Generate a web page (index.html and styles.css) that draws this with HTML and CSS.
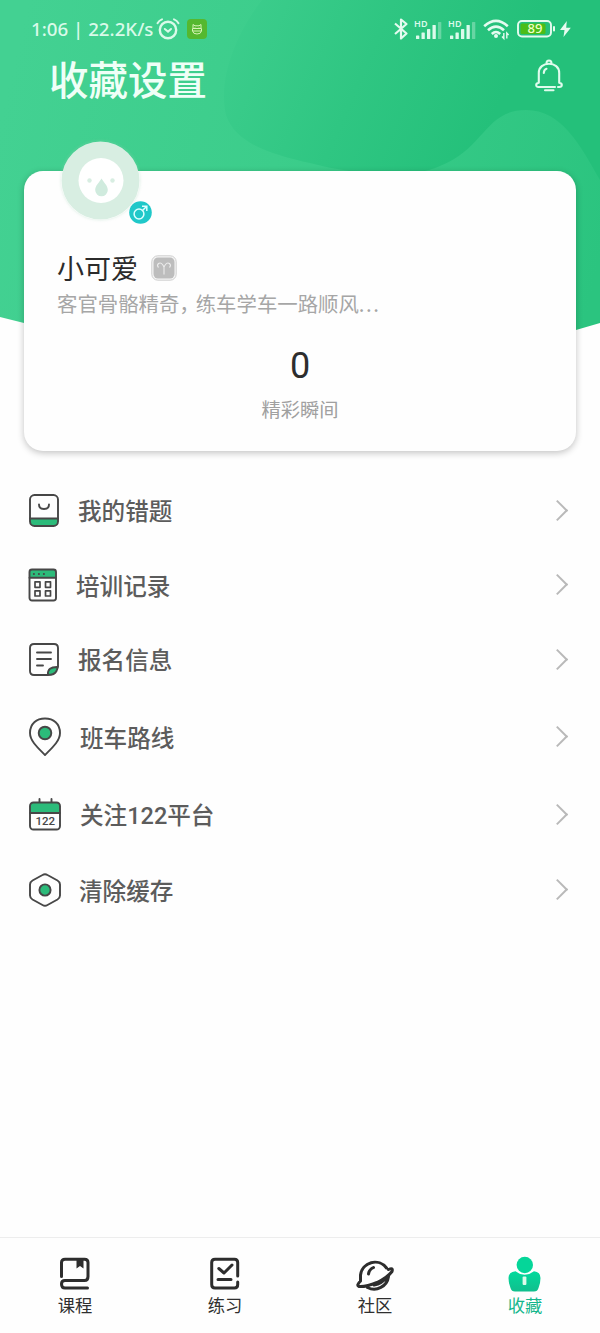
FILE: index.html
```html
<!DOCTYPE html>
<html lang="zh-CN">
<head>
<meta charset="utf-8">
<title>收藏设置</title>
<link rel="stylesheet" href="styles.css">
</head>
<body>
<div class="screen">
  <svg class="backdrop" width="600" height="345" viewBox="0 0 600 345">
    <defs>
      <linearGradient id="base" gradientUnits="userSpaceOnUse" x1="0" y1="120" x2="600" y2="260">
        <stop offset="0" stop-color="#43d192"/><stop offset="0.45" stop-color="#3ccd8b"/><stop offset="1" stop-color="#2bc47f"/>
      </linearGradient>
      <linearGradient id="blob" gradientUnits="userSpaceOnUse" x1="225" y1="40" x2="480" y2="150">
        <stop offset="0" stop-color="#3ccd8c"/><stop offset="0.5" stop-color="#2fc682"/><stop offset="1" stop-color="#24c07a"/>
      </linearGradient>
    </defs>
    <path d="M0 0H600V323L576 330Q300 398 24 323L0 317Z" fill="url(#base)"/>
    <path d="M262 0C235 35 218 80 226 115C236 145 275 155 310 163C350 174 410 180 440 166C485 148 485 110 526 110C562 110 580 145 600 180V0Z" fill="url(#blob)"/>
  </svg>

  <div class="status">
    <span class="clock">1:06 | 22.2K/s</span>
    <svg class="alarm" width="24" height="22" viewBox="0 0 24 22" fill="none" stroke="#d9fae9" stroke-width="2.400" stroke-linecap="round"><circle cx="12" cy="12" r="8.2"/><path d="M1.500 5.200Q3 2.500 6 1.400M22.500 5.200Q21 2.500 18 1.400M8.800 11L12 13.600L15 11" stroke-width="2"/></svg>
    <svg class="app" width="20" height="20" viewBox="0 0 20 20"><rect width="20" height="20" rx="4" fill="#55b82f"/><path d="M6 9V5.500L8 6.800H12L14 5.500V9M5.500 9.500H14.500V12Q14 15 10 15Q6 15 5.500 12ZM6 12H14M8 9.500V8.500M12 9.500V8.500" fill="none" stroke="#d8f4b7" stroke-width="1"/></svg>
    <svg class="bt" width="14" height="22" viewBox="0 0 14 22" fill="none" stroke="#e4fbf0" stroke-width="2.200" stroke-linejoin="round"><path d="M1 5.500L12.500 15.500L7 20.500V1.500L12.500 6L1 16"/></svg>
    <svg class="signal" width="28" height="20" viewBox="0 0 28 20"><text class="hd" x="0" y="8" textLength="13.500">HD</text><g fill="#dcfaeb"><rect x="2" y="16.500" width="3.300" height="3.500" rx=".6"/><rect x="7.500" y="13.500" width="3.300" height="6.500" rx=".6"/><rect x="13" y="10" width="3.300" height="10" rx=".6"/><rect x="18.500" y="6" width="3.300" height="14" rx=".6"/><rect x="24" y="3" width="3.300" height="17" rx=".6" opacity=".35"/></g></svg>
    <svg class="signal" width="28" height="20" viewBox="0 0 28 20"><text class="hd" x="0" y="8" textLength="13.500">HD</text><g fill="#dcfaeb"><rect x="2" y="16.500" width="3.300" height="3.500" rx=".6"/><rect x="7.500" y="13.500" width="3.300" height="6.500" rx=".6"/><rect x="13" y="10" width="3.300" height="10" rx=".6"/><rect x="18.500" y="6" width="3.300" height="14" rx=".6"/><rect x="24" y="3" width="3.300" height="17" rx=".6" opacity=".35"/></g></svg>
    <svg class="wifi" width="27" height="20" viewBox="0 0 27 20" fill="none" stroke="#e4fbf0" stroke-width="2.600"><path d="M1.200 7.200Q13 -3.500 24.800 7.200M5 11.300Q13 4 21 11.300M8.800 15Q13 11 17.200 15"/><circle cx="13" cy="17" r="2" fill="#e4fbf0" stroke="none"/><path d="M20.800 14V19.500L19 17.500M23.800 19.500V14L25.600 16" stroke-width="1.400"/></svg>
    <svg class="battery" width="39" height="18" viewBox="0 0 39 18"><rect x="1" y="1" width="33" height="15.500" rx="4" fill="none" stroke="#e6fbef" stroke-width="1.900"/><rect x="3.500" y="3.500" width="25" height="10.500" rx="1.500" fill="#4bbd17"/><rect x="36" y="6" width="2" height="5.500" rx="1" fill="#e6fbef"/><text class="pct" x="18" y="13.200" text-anchor="middle">89</text></svg>
    <svg class="bolt" width="11" height="16" viewBox="0 0 11 16" fill="#e6fbef"><path d="M6.800 0L0 9H4.500L3.500 16L10.800 6.800H6.200Z"/></svg>
  </div>

  <div class="titlebar">
    <h1>收藏设置</h1>
    <svg width="28" height="33" viewBox="0 0 28 33" fill="none" stroke="#e0fbed" stroke-width="2.100" stroke-linecap="round" stroke-linejoin="round"><path d="M11.500 4.500Q11.500 1.500 14 1.500Q16.500 1.500 16.500 4.500M20 28H3.500Q1.200 28 1.200 26Q1.200 24.200 3.800 23.800V14C3.800 8 8.500 4.800 14 4.800S24.200 8 24.200 14V23.800Q26.800 24.200 26.800 26Q26.800 28 24.200 28H23M8.800 14Q9 10.500 11.500 9.800M10 31.200H18.500"/></svg>
  </div>

  <section class="card">
    <div class="avatar">
      <svg width="79" height="79" viewBox="0 0 79 79"><circle cx="39.500" cy="39.500" r="39" fill="#d8eee2"/><circle cx="40" cy="39.500" r="22.500" fill="#fff"/><circle cx="28.500" cy="39.500" r="2.200" fill="#d8eee2"/><circle cx="51.500" cy="39.500" r="2.200" fill="#d8eee2"/><path d="M40.500 37.500C43 42 46.800 44.500 46.800 49A6.300 6.300 0 0 1 34.200 49C34.200 44.500 38 42 40.500 37.500Z" fill="#d0ebde"/></svg>
      <svg class="gender" width="23" height="23" viewBox="0 0 23 23"><circle cx="11.500" cy="11.500" r="11.300" fill="#20c8c9"/><g fill="none" stroke="#dcffff" stroke-width="1.500"><circle cx="10" cy="13" r="4.900"/><path d="M13.500 9.500L17.500 5.500M13 5.200H17.800V10"/></g></svg>
    </div>
    <div class="name"><span>小可爱</span>
      <svg width="26" height="26" viewBox="0 0 26 26"><rect x=".8" y=".8" width="24.400" height="24.400" rx="6" fill="#f5f5f5" stroke="#cfcfcf" stroke-width="1"/><rect x="2.500" y="2.500" width="21" height="21" rx="4.500" fill="#bdbdbd"/><path d="M7.500 12.500Q5.500 10.500 7.500 8.500Q10.500 6.500 13 12V19.500M18.500 12.500Q20.500 10.500 18.500 8.500Q15.500 6.500 13 12" fill="none" stroke="#ececec" stroke-width="1.100"/></svg>
    </div>
    <p class="bio">客官骨骼精奇<span class="comma">，</span>练车学车一路顺风<span class="dots">...</span></p>
    <div class="count">0</div>
    <div class="caption">精彩瞬间</div>
  </section>

  <nav class="menu">
    <a class="row"><svg width="34" height="36" viewBox="0 0 34 36"><path d="M2 26H30V30Q30 33 26.500 33H6Q2 33 2 30Z" fill="#2cbb7a"/><g class="ink"><rect x="2" y="2" width="28" height="31" rx="4.500"/><path d="M2 25.500H30M11 11.500Q11 16 16 16Q21 16 21 11.500"/></g></svg><span>我的错题</span><i class="chev"></i></a>
    <a class="row r2"><svg width="34" height="36" viewBox="0 0 34 36"><rect x="1.500" y="2.500" width="26" height="8.500" rx="2" fill="#2cbb7a"/><g class="ink"><rect x="1.500" y="2.500" width="26.500" height="31" rx="2.500"/><path d="M1.500 10.800H27.500"/><path d="M7 14.800H12V20.300H7ZM17.500 14.800H22.500V20.300H17.500ZM7 23.800H12V29H7ZM17.500 23.800H22.500V29H17.500Z" stroke-width="1.700"/><path d="M5.800 7H6M10.800 7H11M15.800 7H16"/></g></svg><span>培训记录</span><i class="chev"></i></a>
    <a class="row"><svg width="34" height="36" viewBox="0 0 34 36"><path d="M20 33Q19 24.500 30 25L27 31Z" fill="#2cbb7a"/><g class="ink"><path d="M20 33H6Q2 33 2 29V6Q2 2 6 2H26Q30 2 30 6V25L28.500 29Q26.500 33 20 33ZM20 33Q19 24.500 30 25M9 10.500H23M9 17H23M9 23.500H15"/></g></svg><span>报名信息</span><i class="chev"></i></a>
    <a class="row r4"><svg width="34" height="42" viewBox="0 0 34 42"><g class="ink"><path d="M17 39C10 32 2 25 2 17C2 7.500 8.500 2.500 17 2.500C25.500 2.500 32 7.500 32 17C32 25 24 32 17 39Z"/><circle cx="17" cy="17" r="6.300" fill="#2cbb7a"/></g></svg><span>班车路线</span><i class="chev"></i></a>
    <a class="row r4"><svg width="34" height="36" viewBox="0 0 34 36"><rect x="2" y="5.500" width="30" height="11" rx="3" fill="#2cbb7a"/><g class="ink"><rect x="2" y="5.500" width="30" height="27" rx="3.500"/><path d="M2 16H32M11.500 2V5M23.500 2V5"/></g><text class="cal" x="17.300" y="28.300" text-anchor="middle">122</text></svg><span>关注<b class="num">122</b>平台</span><i class="chev"></i></a>
    <a class="row r6"><svg width="34" height="36" viewBox="0 0 34 36"><g class="ink"><path d="M14.500 3Q17 1.500 19.500 3L29.500 8.500Q32 10 32 12.500V23.500Q32 26 29.500 27.500L19.500 33Q17 34.500 14.500 33L4.500 27.500Q2 26 2 23.500V12.500Q2 10 4.500 8.500Z"/><circle cx="17" cy="18" r="5.600" fill="#2cbb7a"/></g></svg><span>清除缓存</span><i class="chev"></i></a>
  </nav>

  <footer class="tabs">
    <a class="tab"><svg width="38" height="36" viewBox="0 0 38 36" class="dark"><path d="M5.500 20.500V6.500Q5.500 3.200 9 3.200H28.500Q32 3.200 32 6.500V20.500Q32 24.500 28.500 24.500H9Q5.500 24.500 5.500 28Q5.500 32 9 32H31.500"/><path d="M20.500 3H27.500V12.500L24 10L20.500 12.500Z" fill="#2d2d2d" stroke="none"/></svg><span>课程</span></a>
    <a class="tab"><svg width="38" height="36" viewBox="0 0 38 36" class="dark"><path d="M31.700 20V6.500Q31.700 3.200 28.500 3.200H9Q5.700 3.200 5.700 6.500V28.500Q5.700 32 9 32H28.500Q31.700 32 31.700 28.500V26M12.800 12.500L18 17L26 9M12 23.500H25"/></svg><span>练习</span></a>
    <a class="tab"><svg width="40" height="36" viewBox="0 0 40 36" class="dark"><path d="M5.500 25V19A14.500 14.500 0 0 1 31.500 12M33.500 20.500A14.500 14.500 0 0 1 12.500 31.500M13.500 18Q14 13.500 18.500 11.500M33.500 13.500Q38.500 11 37 15.500Q32 22 22 26.500Q11 31 4 30.500Q1 29.500 5.500 25M19 29Q27 27.500 32 21"/></svg><span>社区</span></a>
    <a class="tab active"><svg width="38" height="36" viewBox="0 0 38 36"><defs><linearGradient id="person" x1="0" y1="0" x2="0" y2="1"><stop offset="0" stop-color="#02da9c"/><stop offset="1" stop-color="#10bf8d"/></linearGradient></defs><circle cx="18.800" cy="9" r="8.200" fill="#05d699"/><path d="M9.500 15.200Q18.500 22.500 28 15.200Q34.500 16 34.500 22Q34.500 27 32.500 32Q31.500 35.500 28 35.500H9Q5.500 35.500 4.500 32Q2.500 27 2.500 22Q2.500 16 9.500 15.200Z" fill="url(#person)"/><rect x="16.600" y="20.500" width="3.800" height="8.500" rx="1" fill="#dffbea"/></svg><span>收藏</span></a>
  </footer>
</div>
</body>
</html>
```
FILE: styles.css
```css
* { box-sizing: border-box; }
body {
  margin: 0;
  background: #fefefe;
  font-family: "Noto Sans CJK SC", "Noto Sans", sans-serif;
}
svg { display: block; flex: none; overflow: visible; }
.screen {
  position: relative;
  display: flex;
  flex-direction: column;
  width: 600px;
  height: 1333px;
  overflow: hidden;
}
.backdrop { position: absolute; left: 0; top: 0; z-index: -1; }

.status {
  display: flex;
  align-items: center;
  height: 58px;
  padding-left: 31px;
  color: #d9fae9;
}
.clock {
  width: 125px;
  font: 500 18.700px/24px "Noto Sans", sans-serif;
  white-space: nowrap;
}
.app { margin-left: 7px; }
.bt { margin-left: 187px; }
.signal { margin-left: 6px; }
.wifi { margin-left: 7px; }
.battery { margin-left: 7px; }
.bolt { margin-left: 4px; }
.hd { font: 600 9px "Noto Sans", sans-serif; fill: #dcfaeb; }
.pct { font: 500 13px "Noto Sans", sans-serif; fill: #f0ffc9; }

.titlebar {
  display: flex;
  align-items: center;
  justify-content: space-between;
  height: 42px;
  padding: 0 37px 0 49px;
}
.titlebar svg { margin-bottom: 8px; }
h1 {
  margin: 0 0 3px;
  font-size: 39.500px;
  font-weight: 500;
  line-height: 42px;
  color: #effff7;
}

.card {
  display: flex;
  flex-direction: column;
  height: 280px;
  margin: 71px 24px 0;
  padding-left: 33px;
  border-radius: 19px;
  background: #fefefe;
  box-shadow: 0 2px 7px rgba(0, 0, 0, .24);
}
.avatar { position: relative; width: 79px; height: 79px; margin: -30px 0 0 4px; border-radius: 50%; box-shadow: 0 0 3px rgba(160, 210, 182, .4); }
.gender { position: absolute; left: 68px; top: 60px; }
.name {
  display: flex;
  align-items: center;
  gap: 13px;
  height: 34px;
  margin-top: 31px;
  font-size: 27px;
  line-height: 34px;
  color: #2b2b2b;
}
.bio {
  margin: 3px 0 0;
  font-size: 20.400px;
  font-weight: 400;
  line-height: 30px;
  color: #a6a6a6;
  white-space: nowrap;
}
.comma { letter-spacing: -4px; }
.dots { letter-spacing: 1.500px; }
.count {
  margin: 26px 33px 0 0;
  font: 400 36px/44px Roboto, sans-serif;
  text-align: center;
  color: #2d2d2d;
}
.caption {
  margin: 8px 33px 0 0;
  font-size: 19.300px;
  font-weight: 400;
  line-height: 26px;
  text-align: center;
  color: #a0a0a0;
}

.menu {
  display: grid;
  grid-template-rows: 75px 74px 75px 80px 75px 76px;
  margin-top: 22px;
  padding: 0 32.500px 0 28px;
}
.row {
  display: flex;
  align-items: center;
  gap: 16px;
  font-size: 23.600px;
  font-weight: 500;
  color: #5c5c5c;
}
.row span { margin-bottom: 1px; }
.row.r2 { gap: 14px; }
.row.r4 { gap: 18px; }
.row.r6 { gap: 17px; }
.num { font: 500 23.500px Roboto, sans-serif; }
.ink { fill: none; stroke: #474747; stroke-width: 1.900; stroke-linecap: round; stroke-linejoin: round; }
.cal { font: 500 11.500px Roboto, sans-serif; fill: #474747; }
.chev {
  width: 15px;
  height: 15px;
  margin: 0 3px 1px auto;
  border: solid #b9b9b9;
  border-width: 2.500px 2.500px 0 0;
  transform: rotate(45deg);
}

.tabs {
  display: flex;
  height: 96px;
  margin-top: auto;
  padding-top: 18px;
  border-top: 1px solid #ededed;
}
.tab {
  display: flex;
  flex: 1;
  flex-direction: column;
  align-items: center;
  font-size: 17.300px;
  line-height: 24px;
  color: #2f2f2f;
}
.tab span { margin-top: 1px; }
.dark { fill: none; stroke: #2d2d2d; stroke-width: 3; stroke-linecap: round; stroke-linejoin: round; }
.active { color: #16b78c; }
```
